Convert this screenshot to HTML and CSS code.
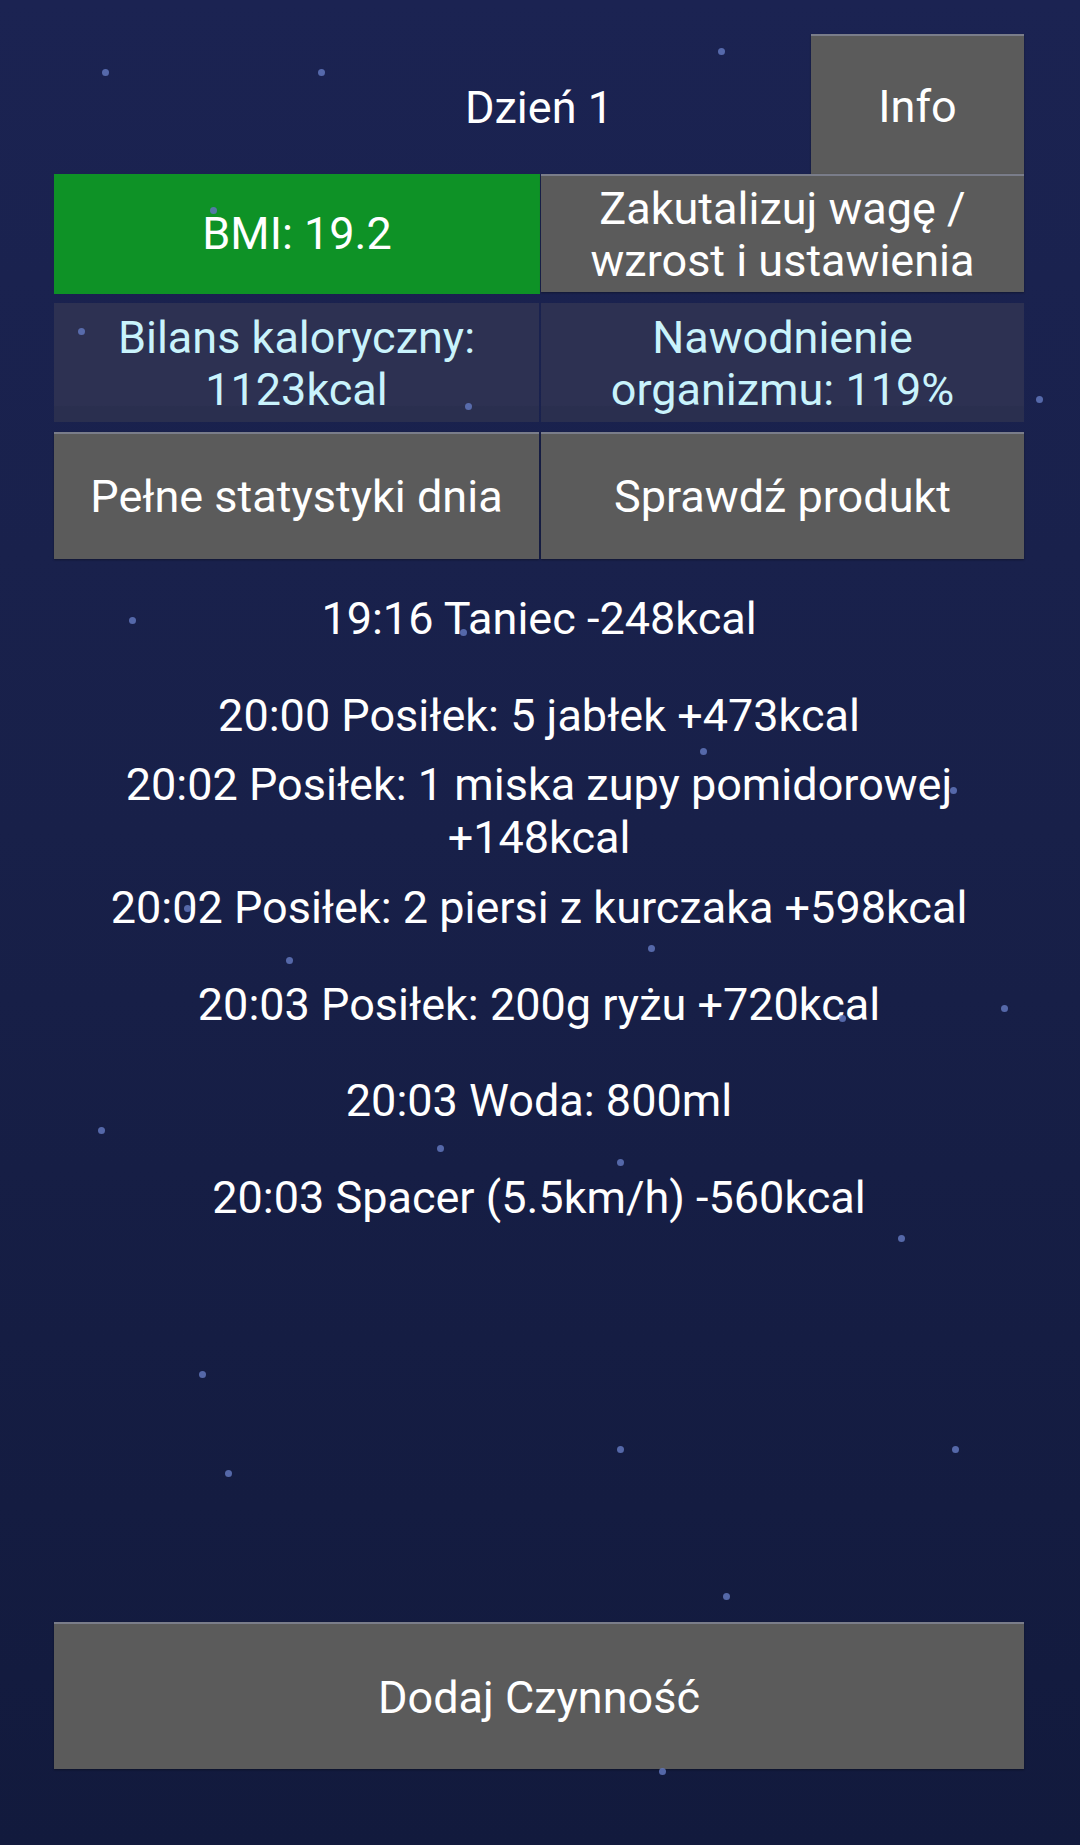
FILE: index.html
```html
<!DOCTYPE html>
<html lang="pl">
<head>
<meta charset="utf-8">
<title>Dzień 1</title>
<link rel="stylesheet" href="styles.css">
</head>
<body>
<div class="screen">
  <div class="content">
    <header class="top">
      <div class="day">Dzień 1</div>
      <div class="btn info">Info</div>
    </header>
    <div class="pair row-bmi">
      <div class="cell bmi">BMI: 19.2</div>
      <div class="btn cell">Zakutalizuj wagę /<br>wzrost i ustawienia</div>
    </div>
    <div class="pair row-stats">
      <div class="cell stat">Bilans kaloryczny:<br>1123kcal</div>
      <div class="cell stat">Nawodnienie<br>organizmu: 119%</div>
    </div>
    <div class="pair row-actions">
      <div class="btn cell">Pełne statystyki dnia</div>
      <div class="btn cell">Sprawdź produkt</div>
    </div>
    <ul class="log">
      <li><span>19:16 Taniec -248kcal</span></li>
      <li><span>20:00 Posiłek: 5 jabłek +473kcal</span></li>
      <li><span>20:02 Posiłek: 1 miska zupy pomidorowej +148kcal</span></li>
      <li><span>20:02 Posiłek: 2 piersi z kurczaka +598kcal</span></li>
      <li><span>20:03 Posiłek: 200g ryżu +720kcal</span></li>
      <li><span>20:03 Woda: 800ml</span></li>
      <li><span>20:03 Spacer (5.5km/h) -560kcal</span></li>
    </ul>
    <div class="btn add">Dodaj Czynność</div>
  </div>
  <div class="stars" aria-hidden="true">
    <i style="left:105px;top:72px"></i>
    <i style="left:321px;top:72px"></i>
    <i style="left:721px;top:51px"></i>
    <i style="left:81px;top:331px"></i>
    <i style="left:213px;top:210px"></i>
    <i style="left:468px;top:406px"></i>
    <i style="left:1039px;top:399px"></i>
    <i style="left:132px;top:620px"></i>
    <i style="left:463px;top:632px"></i>
    <i style="left:703px;top:751px"></i>
    <i style="left:953px;top:790px"></i>
    <i style="left:187px;top:908px"></i>
    <i style="left:289px;top:960px"></i>
    <i style="left:651px;top:948px"></i>
    <i style="left:1004px;top:1008px"></i>
    <i style="left:842px;top:1018px"></i>
    <i style="left:101px;top:1130px"></i>
    <i style="left:440px;top:1148px"></i>
    <i style="left:620px;top:1162px"></i>
    <i style="left:901px;top:1238px"></i>
    <i style="left:202px;top:1374px"></i>
    <i style="left:228px;top:1473px"></i>
    <i style="left:620px;top:1449px"></i>
    <i style="left:955px;top:1449px"></i>
    <i style="left:726px;top:1596px"></i>
    <i style="left:662px;top:1771px"></i>
  </div>
</div>
</body>
</html>
```

FILE: styles.css
```css
html, body {
  margin: 0;
  padding: 0;
}

body {
  width: 1080px;
  height: 1845px;
  overflow: hidden;
  font-family: Roboto, "Noto Sans", "Liberation Sans", sans-serif;
  color: #ffffff;
  background: #151c44;
}

.screen {
  position: relative;
  width: 1080px;
  height: 1845px;
  background: linear-gradient(180deg, #1b2352 0%, #182049 45%, #121a3d 100%);
}

.content {
  box-sizing: border-box;
  height: 1845px;
  padding: 34px 56px 76px 54px;
  display: flex;
  flex-direction: column;
}

.btn {
  background: #5b5b5b;
  box-shadow: inset 0 2px 0 #7a7d8a, 0 1px 2px rgba(0, 0, 0, 0.35);
  color: #ffffff;
}

.top {
  display: grid;
  height: 140px;
}

.day,
.info {
  grid-area: 1 / 1;
  display: flex;
  align-items: center;
  justify-content: center;
  font-size: 45px;
  line-height: 52px;
}

.day {
  justify-self: center;
  padding-top: 7px;
}

.info {
  justify-self: end;
  width: 213px;
  height: 140px;
  box-sizing: border-box;
  padding-top: 6px;
}

.pair {
  display: grid;
  grid-template-columns: 486px 483px;
  column-gap: 1px;
}

.cell {
  display: flex;
  align-items: center;
  justify-content: center;
  text-align: center;
  font-size: 45px;
  line-height: 52px;
}

.row-bmi {
  height: 120px;
  align-items: start;
}

.row-bmi .cell {
  height: 120px;
}

.row-bmi .btn {
  height: 118px;
  box-sizing: border-box;
  padding-top: 4px;
}

.bmi {
  background: #0e9226;
  color: #ffffff;
}

.row-stats {
  margin-top: 9px;
  height: 119px;
  column-gap: 2px;
  grid-template-columns: 485px 483px;
}

.stat {
  background: linear-gradient(180deg, #2d3152 0%, #2d3152 86%, #2a2f4f 87%, #2a2f4f 100%);
  color: #c9f3fc;
  padding-top: 2px;
}

.row-actions {
  margin-top: 10px;
  height: 127px;
  column-gap: 2px;
  grid-template-columns: 485px 483px;
}

.row-actions .cell {
  padding-top: 2px;
}

.log {
  list-style: none;
  margin: 11px 0 0;
  padding: 0;
  display: flex;
  flex-direction: column;
}

.log li {
  height: 96.4px;
  display: flex;
  align-items: center;
  justify-content: center;
  text-align: center;
  font-size: 45px;
  line-height: 53px;
  padding-top: 1px;
  box-sizing: border-box;
  overflow: visible;
}

.add {
  margin-top: auto;
  height: 147px;
  display: flex;
  align-items: center;
  justify-content: center;
  font-size: 45px;
  line-height: 52px;
  padding-top: 4px;
  box-sizing: border-box;
}

.stars {
  position: absolute;
  inset: 0;
  pointer-events: none;
}

.stars i {
  position: absolute;
  width: 7px;
  height: 7px;
  margin: -3px 0 0 -3px;
  border-radius: 50%;
  background: #6075bb;
  opacity: 0.85;
}
```
